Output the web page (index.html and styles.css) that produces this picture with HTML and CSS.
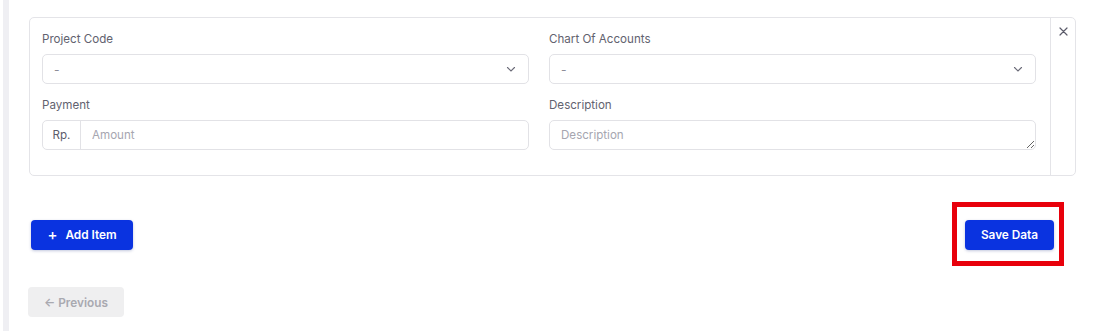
FILE: index.html
```html
<!DOCTYPE html>
<html lang="en">
<head>
    <meta charset="UTF-8">
    <meta name="viewport" content="width=device-width, initial-scale=1.0">
    <title>Payment Items</title>
    <link rel="stylesheet" href="styles.css">
</head>
<body>
    <div class="page">
        <div class="rail"></div>
        <div class="content">
            <div class="item-card">
                <div class="item-body">
                    <div class="field">
                        <label>Project Code</label>
                        <div class="select">
                            <span>-</span>
                            <svg width="12" height="12" viewBox="0 0 12 12"><path d="M2.5 4.5 L6 8 L9.5 4.5" fill="none" stroke="#6b6b78" stroke-width="1.1" stroke-linecap="round"/></svg>
                        </div>
                    </div>
                    <div class="field">
                        <label>Chart Of Accounts</label>
                        <div class="select">
                            <span>-</span>
                            <svg width="12" height="12" viewBox="0 0 12 12"><path d="M2.5 4.5 L6 8 L9.5 4.5" fill="none" stroke="#6b6b78" stroke-width="1.1" stroke-linecap="round"/></svg>
                        </div>
                    </div>
                    <div class="field">
                        <label>Payment</label>
                        <div class="input-group">
                            <span class="addon">Rp.</span>
                            <input type="text" placeholder="Amount">
                        </div>
                    </div>
                    <div class="field">
                        <label>Description</label>
                        <textarea placeholder="Description"></textarea>
                    </div>
                </div>
                <div class="item-side">
                    <button class="remove-btn" title="Remove">
                        <svg width="9" height="9" viewBox="0 0 9 9"><path d="M1 1 L8 8 M8 1 L1 8" stroke="#5c5c6b" stroke-width="1.2" stroke-linecap="round"/></svg>
                    </button>
                </div>
            </div>

            <div class="actions">
                <button class="btn btn-primary add-btn"><span class="plus">+</span> Add Item</button>
                <div class="highlight">
                    <button class="btn btn-primary">Save Data</button>
                </div>
            </div>

            <div class="pager">
                <button class="btn btn-disabled" disabled>&larr; Previous</button>
            </div>
        </div>
    </div>
</body>
</html>
```

FILE: styles.css
```css
body {
    margin: 0;
    font-family: 'Inter', 'Liberation Sans', sans-serif;
    background: #ffffff;
    color: #5c5c6b;
}
.page {
    display: flex;
    min-height: 331px;
}
.rail {
    width: 6px;
    margin-left: 3px;
    background: #efeff3;
}
.content {
    flex: 1;
    padding: 17px 28px 0 20px;
}
.item-card {
    display: flex;
    border: 1px solid #e4e4e8;
    border-radius: 5px;
}
.item-body {
    flex: 1;
    display: grid;
    grid-template-columns: 1fr 1fr;
    column-gap: 20px;
    row-gap: 12px;
    padding: 12px 14px 25px 12px;
}
.field label {
    display: block;
    font-size: 11.6px;
    line-height: 18px;
    margin-bottom: 6px;
    color: #62626f;
}
.select {
    height: 30px;
    box-sizing: border-box;
    border: 1px solid #e2e2e6;
    border-radius: 5px;
    display: flex;
    align-items: center;
    justify-content: space-between;
    padding: 0 11px 0 11px;
    font-size: 12px;
    color: #8d8d98;
}
.input-group {
    display: flex;
    height: 30px;
    box-sizing: border-box;
    border: 1px solid #e2e2e6;
    border-radius: 5px;
}
.addon {
    width: 37px;
    border-right: 1px solid #e2e2e6;
    display: flex;
    align-items: center;
    justify-content: center;
    font-size: 11.6px;
    color: #5c5c6b;
}
.input-group input {
    flex: 1;
    border: none;
    outline: none;
    padding: 0 11px;
    font-family: inherit;
    font-size: 11.6px;
    background: transparent;
}
textarea {
    display: block;
    width: 100%;
    height: 30px;
    box-sizing: border-box;
    border: 1px solid #e2e2e6;
    border-radius: 5px;
    padding: 6px 11px;
    font-family: inherit;
    font-size: 11.6px;
    line-height: 16px;
    resize: vertical;
    outline: none;
}
input::placeholder,
textarea::placeholder {
    color: #a6a6b0;
}
.item-side {
    width: 24px;
    border-left: 1px solid #e4e4e8;
    display: flex;
    justify-content: center;
    padding-top: 7px;
}
.remove-btn {
    border: none;
    background: none;
    padding: 0;
    width: 12px;
    height: 12px;
    display: flex;
    align-items: center;
    justify-content: center;
    cursor: pointer;
}
.actions {
    display: flex;
    justify-content: space-between;
    align-items: center;
    margin-top: 44px;
    padding: 0 22px 0 2px;
}
.btn {
    height: 30px;
    border: none;
    border-radius: 4px;
    font-family: inherit;
    font-size: 11.8px;
    font-weight: 600;
    line-height: 30px;
    cursor: pointer;
}
.btn-primary {
    background: #0a33e0;
    color: #ffffff;
    padding: 0 16px;
    box-shadow: 0 1px 3px rgba(10, 30, 120, 0.25);
}
.add-btn {
    width: 102px;
    padding: 0;
    display: flex;
    align-items: center;
    justify-content: center;
}
.plus {
    font-size: 15px;
    font-weight: 500;
    margin-right: 8px;
}
.highlight {
    position: relative;
}
.highlight .btn {
    width: 89px;
    padding: 0;
}
.highlight::after {
    content: "";
    position: absolute;
    left: -13px;
    top: -18px;
    width: 102px;
    height: 54px;
    border: 5px solid #e8000b;
    pointer-events: none;
}
.pager {
    margin-top: 37px;
}
.btn-disabled {
    width: 96px;
    margin-left: -1px;
    background: #efeff0;
    color: #a9a9b0;
    cursor: default;
}
```
